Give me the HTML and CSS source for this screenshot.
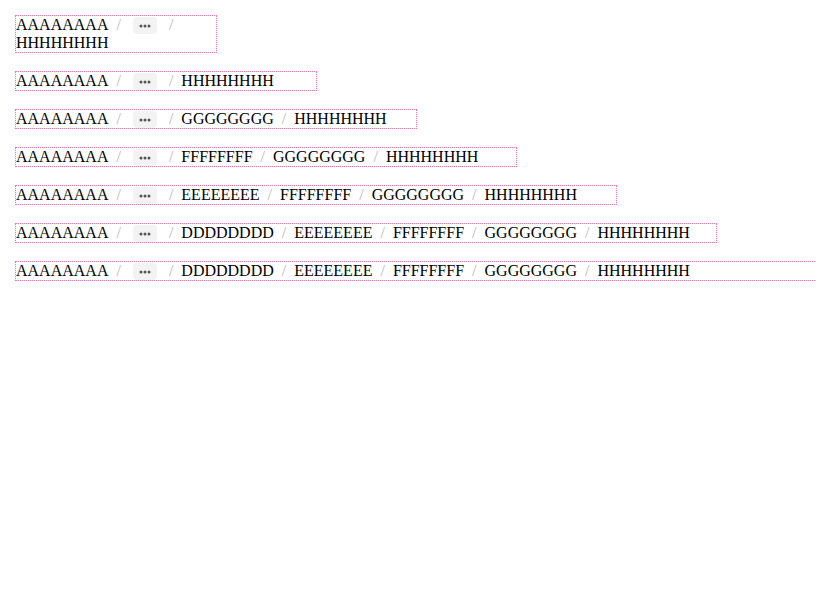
FILE: index.html
```html
<!DOCTYPE html>
<html>
<head>
<meta charset="utf-8">
<link rel="stylesheet" href="styles.css">
</head>
<body>
<div class="list">
  <div class="box w200">
    <ol class="crumbs">
      <li class="item">AAAAAAAA</li><li class="sep">/</li>
      <li class="item more"><span class="dots"><svg width="12" height="4" viewBox="0 0 12 4"><circle cx="2" cy="2" r="1.5"/><circle cx="6" cy="2" r="1.5"/><circle cx="10" cy="2" r="1.5"/></svg></span></li><li class="sep">/</li>
      <li class="item">HHHHHHHH</li>
    </ol>
  </div>
  <div class="box w300">
    <ol class="crumbs">
      <li class="item">AAAAAAAA</li><li class="sep">/</li>
      <li class="item more"><span class="dots"><svg width="12" height="4" viewBox="0 0 12 4"><circle cx="2" cy="2" r="1.5"/><circle cx="6" cy="2" r="1.5"/><circle cx="10" cy="2" r="1.5"/></svg></span></li><li class="sep">/</li>
      <li class="item">HHHHHHHH</li>
    </ol>
  </div>
  <div class="box w400">
    <ol class="crumbs">
      <li class="item">AAAAAAAA</li><li class="sep">/</li>
      <li class="item more"><span class="dots"><svg width="12" height="4" viewBox="0 0 12 4"><circle cx="2" cy="2" r="1.5"/><circle cx="6" cy="2" r="1.5"/><circle cx="10" cy="2" r="1.5"/></svg></span></li><li class="sep">/</li>
      <li class="item">GGGGGGGG</li><li class="sep">/</li>
      <li class="item">HHHHHHHH</li>
    </ol>
  </div>
  <div class="box w500">
    <ol class="crumbs">
      <li class="item">AAAAAAAA</li><li class="sep">/</li>
      <li class="item more"><span class="dots"><svg width="12" height="4" viewBox="0 0 12 4"><circle cx="2" cy="2" r="1.5"/><circle cx="6" cy="2" r="1.5"/><circle cx="10" cy="2" r="1.5"/></svg></span></li><li class="sep">/</li>
      <li class="item">FFFFFFFF</li><li class="sep">/</li>
      <li class="item">GGGGGGGG</li><li class="sep">/</li>
      <li class="item">HHHHHHHH</li>
    </ol>
  </div>
  <div class="box w600">
    <ol class="crumbs">
      <li class="item">AAAAAAAA</li><li class="sep">/</li>
      <li class="item more"><span class="dots"><svg width="12" height="4" viewBox="0 0 12 4"><circle cx="2" cy="2" r="1.5"/><circle cx="6" cy="2" r="1.5"/><circle cx="10" cy="2" r="1.5"/></svg></span></li><li class="sep">/</li>
      <li class="item">EEEEEEEE</li><li class="sep">/</li>
      <li class="item">FFFFFFFF</li><li class="sep">/</li>
      <li class="item">GGGGGGGG</li><li class="sep">/</li>
      <li class="item">HHHHHHHH</li>
    </ol>
  </div>
  <div class="box w700">
    <ol class="crumbs">
      <li class="item">AAAAAAAA</li><li class="sep">/</li>
      <li class="item more"><span class="dots"><svg width="12" height="4" viewBox="0 0 12 4"><circle cx="2" cy="2" r="1.5"/><circle cx="6" cy="2" r="1.5"/><circle cx="10" cy="2" r="1.5"/></svg></span></li><li class="sep">/</li>
      <li class="item">DDDDDDDD</li><li class="sep">/</li>
      <li class="item">EEEEEEEE</li><li class="sep">/</li>
      <li class="item">FFFFFFFF</li><li class="sep">/</li>
      <li class="item">GGGGGGGG</li><li class="sep">/</li>
      <li class="item">HHHHHHHH</li>
    </ol>
  </div>
  <div class="box w800">
    <ol class="crumbs">
      <li class="item">AAAAAAAA</li><li class="sep">/</li>
      <li class="item more"><span class="dots"><svg width="12" height="4" viewBox="0 0 12 4"><circle cx="2" cy="2" r="1.5"/><circle cx="6" cy="2" r="1.5"/><circle cx="10" cy="2" r="1.5"/></svg></span></li><li class="sep">/</li>
      <li class="item">DDDDDDDD</li><li class="sep">/</li>
      <li class="item">EEEEEEEE</li><li class="sep">/</li>
      <li class="item">FFFFFFFF</li><li class="sep">/</li>
      <li class="item">GGGGGGGG</li><li class="sep">/</li>
      <li class="item">HHHHHHHH</li>
    </ol>
  </div>
</div>
</body>
</html>
```

FILE: styles.css
```css
html, body {
  margin: 0;
  padding: 0;
  background: #fff;
}
body {
  padding: 15px;
  font-family: "Liberation Serif", "Times New Roman", serif;
  font-size: 16px;
  line-height: 18px;
  color: #000;
}
.list {
  display: flex;
  flex-direction: column;
  align-items: flex-start;
  gap: 18px;
}
.box {
  border: 1px dotted hotpink;
  flex: none;
}
.w200 { width: 200px; }
.w300 { width: 300px; }
.w400 { width: 400px; }
.w500 { width: 500px; }
.w600 { width: 600px; }
.w700 { width: 700px; }
.w800 { width: 800px; }
.crumbs {
  list-style: none;
  margin: 0;
  padding: 0;
  display: flex;
  flex-wrap: wrap;
  align-items: flex-start;
}
.item {
  white-space: nowrap;
  height: 18px;
}
.sep {
  margin: 0 8px;
  color: #b8b8b8;
  height: 18px;
}
.more {
  display: flex;
  align-items: center;
  padding: 0 4px;
}
.dots {
  display: flex;
  align-items: center;
  justify-content: center;
  width: 24px;
  height: 17px;
  margin-top: 1px;
  background: #f3f3f3;
  border-radius: 4px;
  fill: #555;
}
.dots svg {
  display: block;
}
```
